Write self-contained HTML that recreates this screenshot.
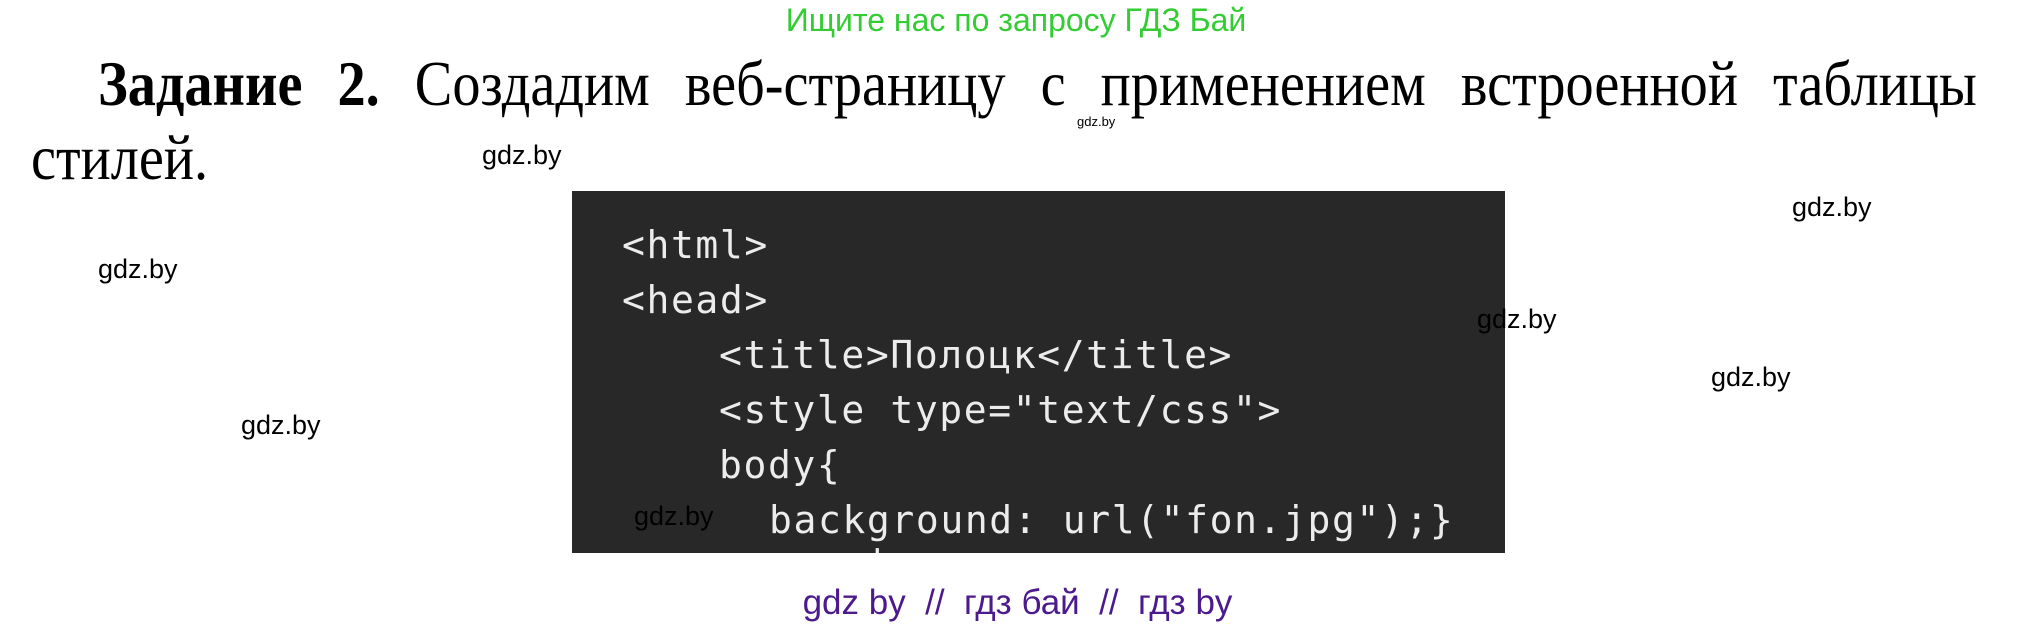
<!DOCTYPE html>
<html><head><meta charset="utf-8"><style>
body{margin:0;width:2027px;height:625px;background:#fff;position:relative;overflow:hidden;font-family:"Liberation Sans",sans-serif}
.a{position:absolute;white-space:nowrap}
.top{left:0;width:2032px;text-align:center;top:2px;font-size:32px;color:#33cc33}
.h{font-family:"Liberation Serif",serif;font-size:64px;color:#000;transform:scaleX(0.88);transform-origin:left top}
.w{font-size:27px;color:#000}
.box{left:572px;top:191px;width:933px;height:362px;background:#282828;overflow:hidden}
.c{position:absolute;font-family:"DejaVu Sans Mono","Liberation Mono",monospace;font-size:38px;color:#ececec;white-space:pre;letter-spacing:1.6px}
.bot{left:0;width:2035px;text-align:center;top:583px;font-size:35px;color:#4b1a8c}
</style></head><body>
<div class="a top">Ищите нас по запросу ГДЗ Бай</div>
<div class="a h" style="left:98px;top:47px;width:2135px;text-align:justify;text-align-last:justify;white-space:normal"><b>Задание 2.</b> Создадим веб-страницу с применением встроенной таблицы</div>
<div class="a h" style="left:31px;top:121px">стилей.</div>
<div class="a box">
<div class="c" style="left:50px;top:32px">&lt;html&gt;</div>
<div class="c" style="left:50px;top:87px">&lt;head&gt;</div>
<div class="c" style="left:147px;top:142px">&lt;title&gt;Полоцк&lt;/title&gt;</div>
<div class="c" style="left:147px;top:197px">&lt;style type="text/css"&gt;</div>
<div class="c" style="left:147px;top:252px">body{</div>
<div class="c" style="left:197px;top:307px">background: url("fon.jpg");}</div>
<div class="c" style="left:147px;top:350px">  .,.,'</div>
</div>
<div class="a" style="left:1077px;top:114px;font-size:13px">gdz.by</div>
<div class="a w" style="left:482px;top:140px">gdz.by</div>
<div class="a w" style="left:1792px;top:192px">gdz.by</div>
<div class="a w" style="left:98px;top:254px">gdz.by</div>
<div class="a w" style="left:1477px;top:304px">gdz.by</div>
<div class="a w" style="left:1711px;top:362px">gdz.by</div>
<div class="a w" style="left:241px;top:410px">gdz.by</div>
<div class="a w" style="left:634px;top:501px">gdz.by</div>
<div class="a bot">gdz by &nbsp;// &nbsp;гдз бай &nbsp;// &nbsp;гдз by</div>
</body></html>
